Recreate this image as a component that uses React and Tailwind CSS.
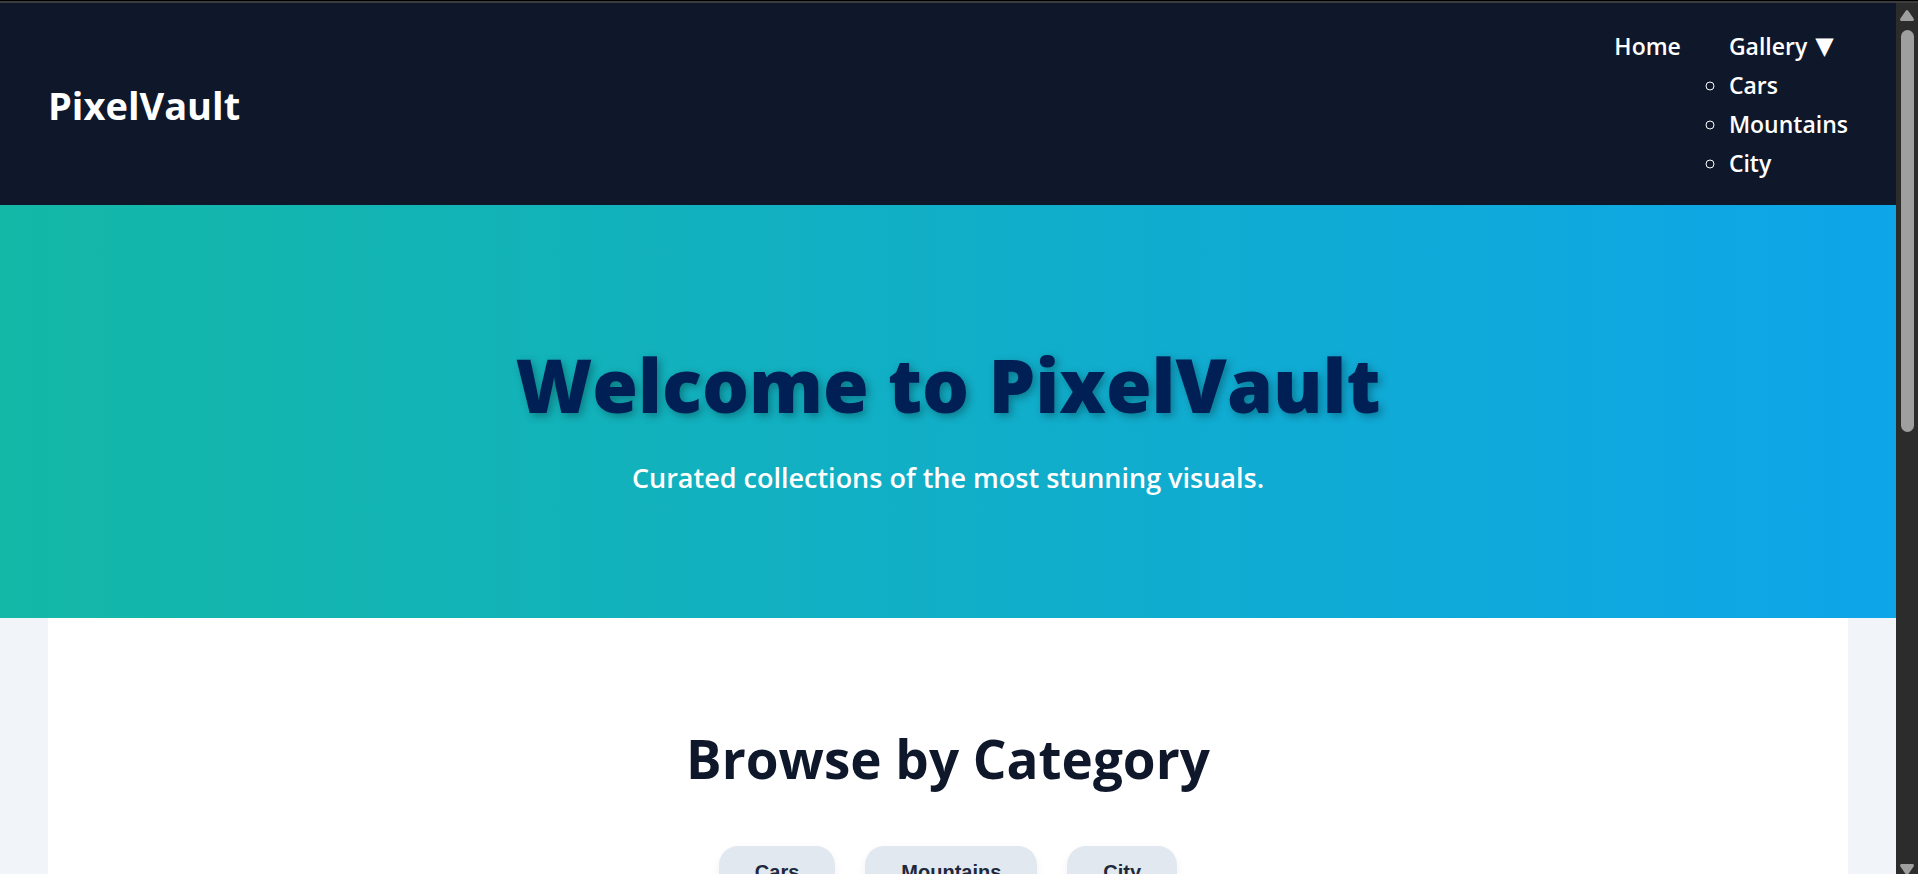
const categories = ["Cars", "Mountains", "City"];

function Header() {
  return (
    <header className="flex items-center justify-between bg-[#0f172a] px-12 pb-[22px] pt-6 text-white">
      <div className="text-[38px] font-bold leading-[60px]">PixelVault</div>
      <nav aria-label="Main">
        <ul className="flex gap-12 text-[23px] font-semibold leading-[39px]">
          <li>
            <a href="#home">Home</a>
          </li>
          <li>
            <a href="#gallery" className="flex gap-2">
              Gallery <span className="font-['DejaVu_Sans',sans-serif] text-[24px] font-normal">▼</span>
            </a>
            <ul className="list-[circle]">
              {categories.map((name) => (
                <li key={name}>
                  <a href={`#${name.toLowerCase()}`}>{name}</a>
                </li>
              ))}
            </ul>
          </li>
        </ul>
      </nav>
    </header>
  );
}

function Hero() {
  return (
    <section className="bg-[linear-gradient(to_right,#14b8a6,#0ea5e9)] px-12 pb-[118px] pt-[122px] text-center">
      <h1 className="text-[74px] font-extrabold leading-[116px] text-[#001f54] [text-shadow:3px_3px_8px_rgba(0,0,0,0.3)]">
        Welcome to PixelVault
      </h1>
      <p className="mt-3 text-[27px] font-semibold leading-[45px] text-white">
        Curated collections of the most stunning visuals.
      </p>
    </section>
  );
}

function Categories() {
  return (
    <main className="mx-12 bg-white px-12 pb-24 pt-[98px] text-center">
      <h2 className="text-[53px] font-bold leading-[86px] text-[#0f172a]">Browse by Category</h2>
      <div className="mt-11 flex justify-center gap-[30px]">
        {categories.map((name) => (
          <button
            key={name}
            type="button"
            className="rounded-[19px] bg-[#e2e8f0] px-9 py-[14px] font-['Liberation_Sans',Arial,sans-serif] text-[20px] font-bold leading-6 text-[#1e293b] shadow-[0_4px_10px_rgba(0,0,0,0.06)]"
          >
            {name}
          </button>
        ))}
      </div>
    </main>
  );
}

function Scrollbar() {
  return (
    <div aria-hidden="true" className="flex w-[22px] shrink-0 flex-col items-center bg-[#2c2c2c] pt-[7px]">
      <svg className="h-[11px] w-[14px] shrink-0" viewBox="0 0 14 11" fill="#9f9f9f">
        <path d="M5.6.9Q7-.7 8.400.9L13.600 8.500Q14.500 11 12.500 11H1.500Q-.5 11 .4 8.500Z" />
      </svg>
      <div className="mt-[9px] h-[46.5%] w-[13px] rounded-full bg-[#9f9f9f]" />
      <svg className="-mb-0.5 mt-auto h-[12px] w-[14px] shrink-0" viewBox="0 0 14 12" fill="#9f9f9f">
        <path d="M1.500 0H12.500Q14.500 0 13.600 2.500L8.400 10.100Q7 11.700 5.600 10.100L.4 2.500Q-.5 0 1.500 0Z" />
      </svg>
    </div>
  );
}

export default function App() {
  return (
    <div className="flex h-screen flex-col overflow-hidden bg-[#f1f5f9] font-['Open_Sans','Noto_Sans',sans-serif]">
      <div className="h-[3px] shrink-0 border-t border-black bg-[#3c3c3c]" />
      <div className="flex min-h-0 flex-1">
        <div className="min-w-0 flex-1 overflow-hidden">
          <Header />
          <Hero />
          <Categories />
        </div>
        <Scrollbar />
      </div>
    </div>
  );
}
